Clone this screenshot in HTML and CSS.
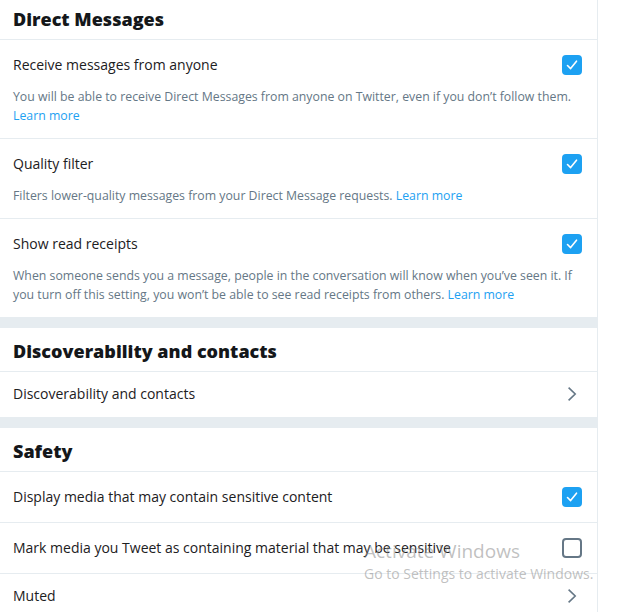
FILE: index.html
```html
<!DOCTYPE html>
<html lang="en">
<head>
    <meta charset="UTF-8">
    <meta name="viewport" content="width=device-width, initial-scale=1.0">
    <title>Settings - Privacy and safety</title>
    <link rel="stylesheet" href="styles.css">
</head>
<body>

    <div class="page">
        <h2 class="section-title first">Direct Messages</h2>

        <div class="setting">
            <div class="setting-row">
                <span class="setting-label">Receive messages from anyone</span>
                <span class="check on"><svg viewBox="0 0 20 20"><path d="M5.5 10.5 L8.6 13.6 L14.5 6.2"/></svg></span>
            </div>
            <p class="setting-desc">You will be able to receive Direct Messages from anyone on Twitter, even if you don’t follow them. <a href="#">Learn more</a></p>
        </div>

        <div class="setting">
            <div class="setting-row">
                <span class="setting-label">Quality filter</span>
                <span class="check on"><svg viewBox="0 0 20 20"><path d="M5.5 10.5 L8.6 13.6 L14.5 6.2"/></svg></span>
            </div>
            <p class="setting-desc">Filters lower-quality messages from your Direct Message requests. <a href="#">Learn more</a></p>
        </div>

        <div class="setting">
            <div class="setting-row">
                <span class="setting-label">Show read receipts</span>
                <span class="check on"><svg viewBox="0 0 20 20"><path d="M5.5 10.5 L8.6 13.6 L14.5 6.2"/></svg></span>
            </div>
            <p class="setting-desc">When someone sends you a message, people in the conversation will know when you’ve seen it. If you turn off this setting, you won’t be able to see read receipts from others. <a href="#">Learn more</a></p>
        </div>

        <div class="band"></div>

        <h2 class="section-title">Discoverability and contacts</h2>

        <a class="link-row" href="#">
            <span class="setting-label">Discoverability and contacts</span>
            <svg class="chevron" viewBox="0 0 20 20"><path d="M6.6 3.6 L13.2 10 L6.6 16.4"/></svg>
        </a>

        <div class="band"></div>

        <h2 class="section-title">Safety</h2>

        <div class="check-row">
            <span class="setting-label">Display media that may contain sensitive content</span>
            <span class="check on"><svg viewBox="0 0 20 20"><path d="M5.5 10.5 L8.6 13.6 L14.5 6.2"/></svg></span>
        </div>

        <div class="check-row">
            <span class="setting-label">Mark media you Tweet as containing material that may be sensitive</span>
            <span class="check"></span>
        </div>

        <a class="link-row" href="#">
            <span class="setting-label">Muted</span>
            <svg class="chevron" viewBox="0 0 20 20"><path d="M6.6 3.6 L13.2 10 L6.6 16.4"/></svg>
        </a>
    </div>

    <div class="watermark">
        <div class="wm-title">Activate Windows</div>
        <div class="wm-sub">Go to Settings to activate Windows.</div>
    </div>

</body>
</html>
```

FILE: styles.css
```css
body { margin: 0; background: #fff; font-family: "Open Sans", "Noto Sans", sans-serif; color: #14171a; }
.page { width: 597px; border-right: 1px solid #e6ecf0; }

.section-title { margin: 0; padding: 12px 13px 8px; font-size: 18px; line-height: 23px; font-weight: 800; border-bottom: 1px solid #e6ecf0; }
.section-title.first { padding-top: 8px; }

.setting { padding: 15px 15px 13px 13px; border-bottom: 1px solid #e6ecf0; }
.setting-row { display: flex; align-items: center; justify-content: space-between; }
.setting-label { font-size: 14px; line-height: 20px; color: #1c2022; }
.setting-desc { margin: 12px 0 0; font-size: 12.3px; line-height: 19px; color: #657786; }
.setting-desc a { color: #1da1f2; text-decoration: none; }

.band { height: 10px; background: #e6ecf0; }

.check { width: 20px; height: 20px; box-sizing: border-box; border: 2px solid #657786; border-radius: 4px; flex-shrink: 0; }
.check.on { background: #1da1f2; border-color: #1da1f2; }
.check svg { display: block; width: 20px; height: 20px; margin: -2px; fill: none; stroke: #fff; stroke-width: 1.6; stroke-linecap: round; stroke-linejoin: round; }

.check-row { display: flex; align-items: center; justify-content: space-between; padding: 15px 15px 15px 13px; border-bottom: 1px solid #e6ecf0; }
.link-row { display: flex; align-items: center; justify-content: space-between; padding: 12px 15px 13px 13px; color: inherit; text-decoration: none; border-bottom: 1px solid #e6ecf0; }
.chevron { width: 20px; height: 20px; fill: none; stroke: #657786; stroke-width: 1.6; }

.watermark { position: absolute; left: 364px; top: 539px; color: rgba(130, 130, 130, 0.5); font-family: "Open Sans", sans-serif; pointer-events: none; }
.wm-title { font-size: 19px; line-height: 25px; }
.wm-sub { font-size: 14px; line-height: 20px; }
```
